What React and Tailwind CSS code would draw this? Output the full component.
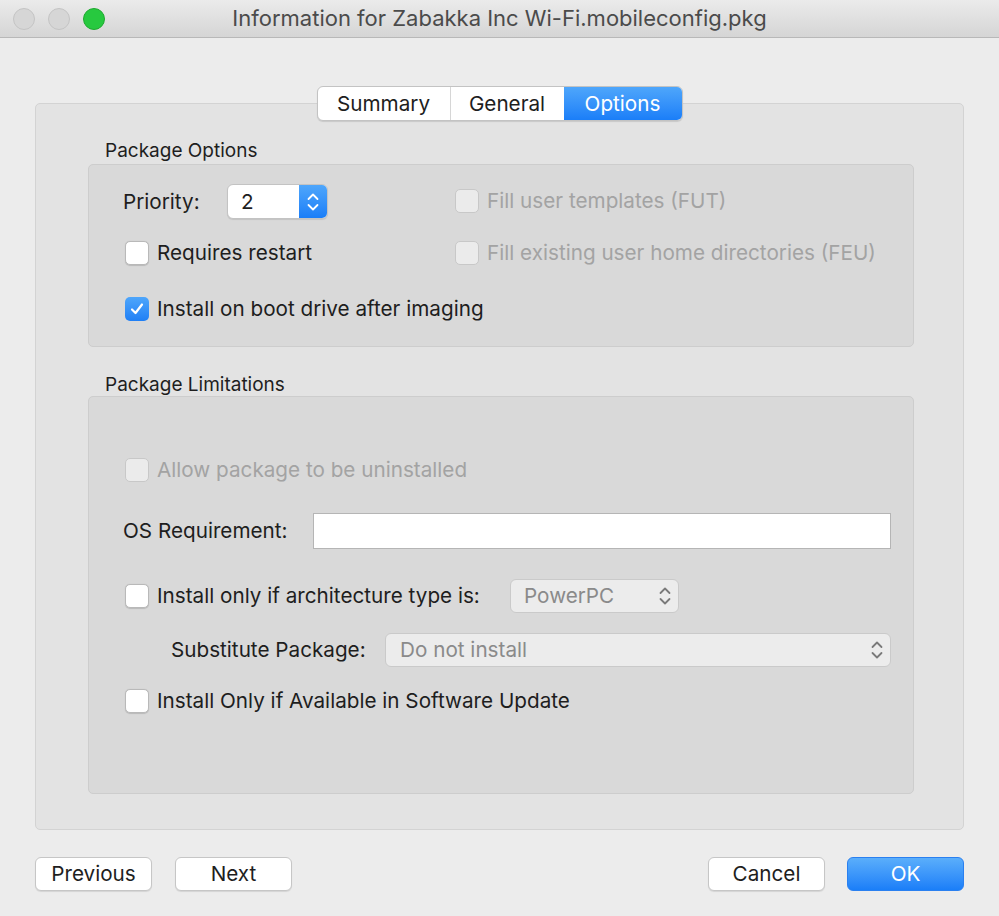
import React from "react";

const font = { fontFamily: "Inter, 'Noto Sans', sans-serif" };

function Checkbox({ checked, disabled, label }) {
  return (
    <div className="flex items-center gap-2 h-[24px]">
      {checked ? (
        <span className="w-[24px] h-[24px] shrink-0 rounded-[5px] bg-gradient-to-b from-[#4ea6fb] to-[#1f7ff5] flex items-center justify-center">
          <svg width="16" height="16" viewBox="0 0 16 16">
            <path d="M3 8.5 L6.5 12 L13 3.5" fill="none" stroke="white" strokeWidth="2.2" strokeLinecap="round" strokeLinejoin="round" />
          </svg>
        </span>
      ) : (
        <span
          className={
            "w-[24px] h-[24px] shrink-0 rounded-[5px] border " +
            (disabled ? "bg-[#ebebeb] border-[#c8c8c8]" : "bg-white border-[#b9b9b9] shadow-[0_0.5px_1px_rgba(0,0,0,0.15)]")
          }
        />
      )}
      <span className={"text-[20.7px] leading-[24px] whitespace-nowrap " + (disabled ? "text-[#a3a3a3]" : "text-[#1e1e1e]")}>{label}</span>
    </div>
  );
}

function Chevrons({ color = "#6b6b6b" }) {
  return (
    <svg width="14" height="24" viewBox="0 0 14 24">
      <path d="M2.5 9 L7 4.5 L11.5 9" fill="none" stroke={color} strokeWidth="1.8" strokeLinecap="round" strokeLinejoin="round" />
      <path d="M2.5 15 L7 19.5 L11.5 15" fill="none" stroke={color} strokeWidth="1.8" strokeLinecap="round" strokeLinejoin="round" />
    </svg>
  );
}

function Button({ children, primary, className = "" }) {
  return (
    <button
      className={
        "h-[34px] w-[117px] rounded-[6px] text-[20.7px] flex items-center justify-center " +
        (primary
          ? "bg-gradient-to-b from-[#5aaefb] to-[#1a7ef8] text-white border border-[#2a80f0]"
          : "bg-white text-[#1e1e1e] border border-[#c6c6c6] shadow-[0_1px_1px_rgba(0,0,0,0.1)]") +
        " " + className
      }
    >
      {children}
    </button>
  );
}

export default function App() {
  return (
    <div className="w-[999px] h-[916px] bg-[#ececec] flex flex-col overflow-hidden" style={font}>
      {/* title bar */}
      <div className="h-[38px] bg-gradient-to-b from-[#ebebeb] to-[#d5d5d5] border-b border-[#b8b8b8] flex items-center relative shrink-0">
        <div className="flex items-center gap-[13px] pl-[13px]">
          <span className="w-[22px] h-[22px] rounded-full bg-[#d6d6d6] border border-[#c4c4c4]" />
          <span className="w-[22px] h-[22px] rounded-full bg-[#d6d6d6] border border-[#c4c4c4]" />
          <span className="w-[22px] h-[22px] rounded-full bg-[#27c93f] border border-[#1eaa2f]" />
        </div>
        <div className="absolute inset-0 flex items-center justify-center text-[22px] text-[#4b4b4b] pointer-events-none">
          Information for Zabakka Inc Wi-Fi.mobileconfig.pkg
        </div>
      </div>

      {/* tab area */}
      <div className="px-[35px] pt-[48px] relative">
        <div className="absolute left-0 right-0 top-[48px] flex justify-center z-10">
          <div className="flex h-[35px] rounded-[6px] border border-[#c3c3c3] bg-white shadow-[0_1px_1px_rgba(0,0,0,0.12)] overflow-hidden text-[20.7px]">
            <div className="w-[133px] flex items-center justify-center text-[#1e1e1e] border-r border-[#d6d6d6]">Summary</div>
            <div className="w-[113px] flex items-center justify-center text-[#1e1e1e]">General</div>
            <div className="w-[118px] flex items-center justify-center text-white bg-gradient-to-b from-[#4ea6fb] to-[#1a7ef8]">Options</div>
          </div>
        </div>

        <div className="mt-[17px] h-[727px] rounded-[5px] bg-[#e3e3e3] border border-[#d3d3d3] pl-[52px] pr-[49px] pt-[36px]">
          <div className="text-[19px] text-[#1e1e1e] pl-[17px] leading-[22px]">Package Options</div>
          <div className="mt-[2px] h-[183px] rounded-[5px] bg-[#d9d9d9] border border-[#cdcdcd] pl-[36px] pt-[19px] relative">
            <div className="flex items-center h-[35px]">
              <span className="text-[20.7px] text-[#1e1e1e] w-[104px] -ml-[2px] whitespace-nowrap">Priority:</span>
              <div className="flex h-[35px] w-[101px] rounded-[6px] border border-[#c3c3c3] bg-white overflow-hidden shadow-[0_1px_1px_rgba(0,0,0,0.1)]">
                <span className="flex-1 pl-[13px] flex items-center text-[20.7px] text-[#1e1e1e]">2</span>
                <span className="w-[28px] bg-gradient-to-b from-[#4ea6fb] to-[#1a7ef8] flex items-center justify-center">
                  <Chevrons color="white" />
                </span>
              </div>
            </div>
            <div className="mt-[22px]">
              <Checkbox label="Requires restart" />
            </div>
            <div className="mt-[32px]">
              <Checkbox checked label="Install on boot drive after imaging" />
            </div>
            <div className="absolute left-[366px] top-[24px] flex flex-col gap-[28px]">
              <Checkbox disabled label="Fill user templates (FUT)" />
              <Checkbox disabled label="Fill existing user home directories (FEU)" />
            </div>
          </div>

          <div className="mt-[27px] text-[19px] text-[#1e1e1e] pl-[17px] leading-[22px]">Package Limitations</div>
          <div className="h-[398px] rounded-[5px] bg-[#d9d9d9] border border-[#cdcdcd] pl-[36px] pr-[22px] pt-[61px]">
            <Checkbox disabled label="Allow package to be uninstalled" />
            <div className="flex items-center mt-[31px]">
              <span className="text-[20.7px] text-[#1e1e1e] w-[190px] shrink-0 -ml-[2px] whitespace-nowrap">OS Requirement:</span>
              <div className="flex-1 h-[36px] bg-white border border-[#b5b5b5]" />
            </div>
            <div className="flex items-center mt-[30px] h-[34px]">
              <div className="w-[385px] shrink-0">
                <Checkbox label="Install only if architecture type is:" />
              </div>
              <div className="w-[169px] h-[34px] rounded-[6px] bg-[#ececec] border border-[#cacaca] flex items-center justify-between pl-[13px] pr-[6px] text-[20.7px] text-[#8a8a8a]">
                <span>PowerPC</span>
                <Chevrons color="#7a7a7a" />
              </div>
            </div>
            <div className="flex items-center mt-[20px] h-[34px]">
              <span className="text-[20.7px] text-[#1e1e1e] w-[260px] shrink-0 pl-[46px] whitespace-nowrap">Substitute Package:</span>
              <div className="flex-1 h-[34px] rounded-[6px] bg-[#ececec] border border-[#cacaca] flex items-center justify-between pl-[14px] pr-[6px] text-[20.7px] text-[#8a8a8a]">
                <span>Do not install</span>
                <Chevrons color="#7a7a7a" />
              </div>
            </div>
            <div className="mt-[22px]">
              <Checkbox label="Install Only if Available in Software Update" />
            </div>
          </div>
        </div>
      </div>

      {/* buttons */}
      <div className="flex items-center px-[35px] mt-[27px]">
        <Button>Previous</Button>
        <Button className="ml-[23px]">Next</Button>
        <div className="flex-1" />
        <Button>Cancel</Button>
        <Button primary className="ml-[22px]">OK</Button>
      </div>
    </div>
  );
}
